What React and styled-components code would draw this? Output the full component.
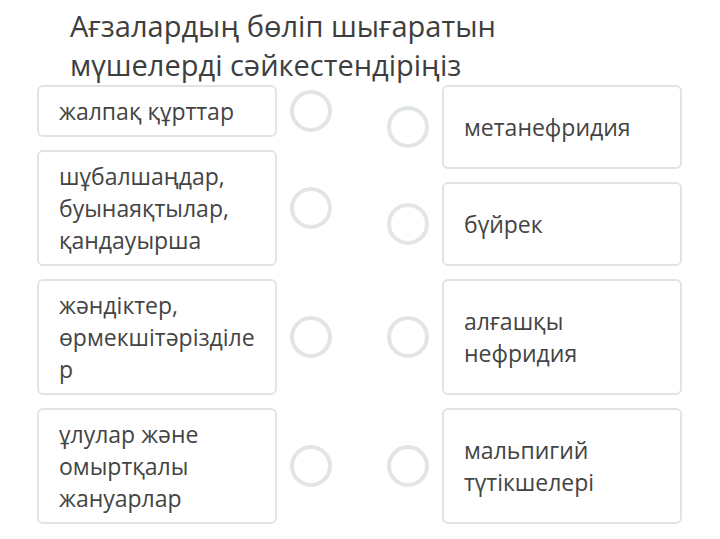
import styled, { createGlobalStyle } from "styled-components";

const Global = createGlobalStyle`
    body {
        margin: 0;
        background: #ffffff;
        font-family: "Open Sans", "Noto Sans", sans-serif;
        color: #404040;
    }
`

const Page = styled.div`
    width: 720px;
    padding-top: 6px;
`

const Title = styled.h1`
    margin: 0 0 0 70px;
    font-size: 29px;
    font-weight: 400;
    line-height: 39px;
    color: #3e3e3e;
    width: 460px;
`

const Board = styled.div`
    display: flex;
    gap: 55px;
    margin: 1px 0 0 37px;
`

const Column = styled.div`
    display: flex;
    flex-direction: column;
    gap: 13px;
`

const Item = styled.div`
    display: flex;
    align-items: center;
    gap: 13px;
`

const Card = styled.div`
    box-sizing: border-box;
    width: 240px;
    min-height: ${p => p.$min || 0}px;
    padding: 8px 18px 8px 20px;
    border: 2px solid #e3e3e3;
    border-radius: 6px;
    font-size: 23px;
    line-height: 32px;
    color: #444;
    overflow-wrap: anywhere;
    display: flex;
    align-items: center;
`

const Dot = styled.div`
    box-sizing: border-box;
    width: 42px;
    height: 42px;
    border-radius: 50%;
    border: 4px solid #e2e5e7;
    flex-shrink: 0;
`

const left = [
    "жалпақ құрттар",
    "шұбалшаңдар, буынаяқтылар, қандауырша",
    "жәндіктер, өрмекшітәрізділер",
    "ұлулар және омыртқалы жануарлар",
]

const right = [
    { text: "метанефридия", min: 84 },
    { text: "бүйрек", min: 84 },
    { text: "алғашқы нефридия", min: 116 },
    { text: "мальпигий түтікшелері", min: 116 },
]

export default function App() {
    return (
        <Page>
            <Global />
            <Title>Ағзалардың бөліп шығаратын мүшелерді сәйкестендіріңіз</Title>
            <Board>
                <Column>
                    {left.map(t => (
                        <Item key={t}>
                            <Card>{t}</Card>
                            <Dot />
                        </Item>
                    ))}
                </Column>
                <Column>
                    {right.map(r => (
                        <Item key={r.text}>
                            <Dot />
                            <Card $min={r.min}>{r.text}</Card>
                        </Item>
                    ))}
                </Column>
            </Board>
        </Page>
    )
}
